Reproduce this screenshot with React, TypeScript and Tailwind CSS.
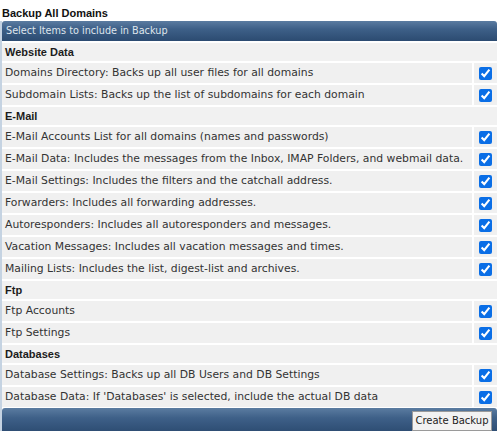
const sections: { title: string; items: string[] }[] = [
  {
    title: "Website Data",
    items: [
      "Domains Directory: Backs up all user files for all domains",
      "Subdomain Lists: Backs up the list of subdomains for each domain",
    ],
  },
  {
    title: "E-Mail",
    items: [
      "E-Mail Accounts List for all domains (names and passwords)",
      "E-Mail Data: Includes the messages from the Inbox, IMAP Folders, and webmail data.",
      "E-Mail Settings: Includes the filters and the catchall address.",
      "Forwarders: Includes all forwarding addresses.",
      "Autoresponders: Includes all autoresponders and messages.",
      "Vacation Messages: Includes all vacation messages and times.",
      "Mailing Lists: Includes the list, digest-list and archives.",
    ],
  },
  {
    title: "Ftp",
    items: ["Ftp Accounts", "Ftp Settings"],
  },
  {
    title: "Databases",
    items: [
      "Database Settings: Backs up all DB Users and DB Settings",
      "Database Data: If 'Databases' is selected, include the actual DB data",
    ],
  },
];

export default function App() {
  return (
    <div className="w-[499px] h-[431px] bg-white overflow-hidden text-[10.8px] text-[#333] font-['DejaVu_Sans',Verdana,sans-serif]">
      <div className="h-[21px] pl-[2px] pt-[8px] font-bold text-[11px] text-[#111] leading-none font-['Liberation_Sans',Arial,sans-serif]">
        Backup All Domains
      </div>

      <div className="border-l-2 border-[#c5d3e2] pr-[2px] flex flex-col gap-[2px]">
        <div className="h-[20px] flex items-center pl-[4px] rounded-t-[3px] text-[9.7px] text-[#dfe5ec] bg-[linear-gradient(#5b7ca1,#3e6088_40%,#2c4b71)]">
          Select Items to include in Backup
        </div>

        {sections.map((s) => (
          <div key={s.title} className="flex flex-col gap-[2px]">
            <div className="h-[18px] flex items-center pl-[3px] bg-[#f1f1f1] font-bold text-[11px] text-[#1c1c1c] font-['Liberation_Sans',Arial,sans-serif]">
              {s.title}
            </div>
            {s.items.map((it) => (
              <div key={it} className="h-[20px] flex gap-[2px]">
                <div className="flex-1 flex items-center pl-[3px] bg-[#f0f0f0] whitespace-nowrap">{it}</div>
                <div className="w-[23px] flex items-center justify-center bg-[#f0f0f0]">
                  <input type="checkbox" checked readOnly className="w-[13px] h-[13px] m-0 accent-[#0a6ee6]" />
                </div>
              </div>
            ))}
          </div>
        ))}

        <div className="h-[25px] -mt-[1px] flex items-center justify-end pr-[5px] rounded-[3px] bg-[linear-gradient(#5b7ca1,#3e6088_40%,#2c4b71)]">
          <button className="h-[20px] w-[80px] bg-[#f2f2f2] border border-[#9a9a9a] text-[#222] text-[10px] leading-none">
            Create Backup
          </button>
        </div>
      </div>
    </div>
  );
}
